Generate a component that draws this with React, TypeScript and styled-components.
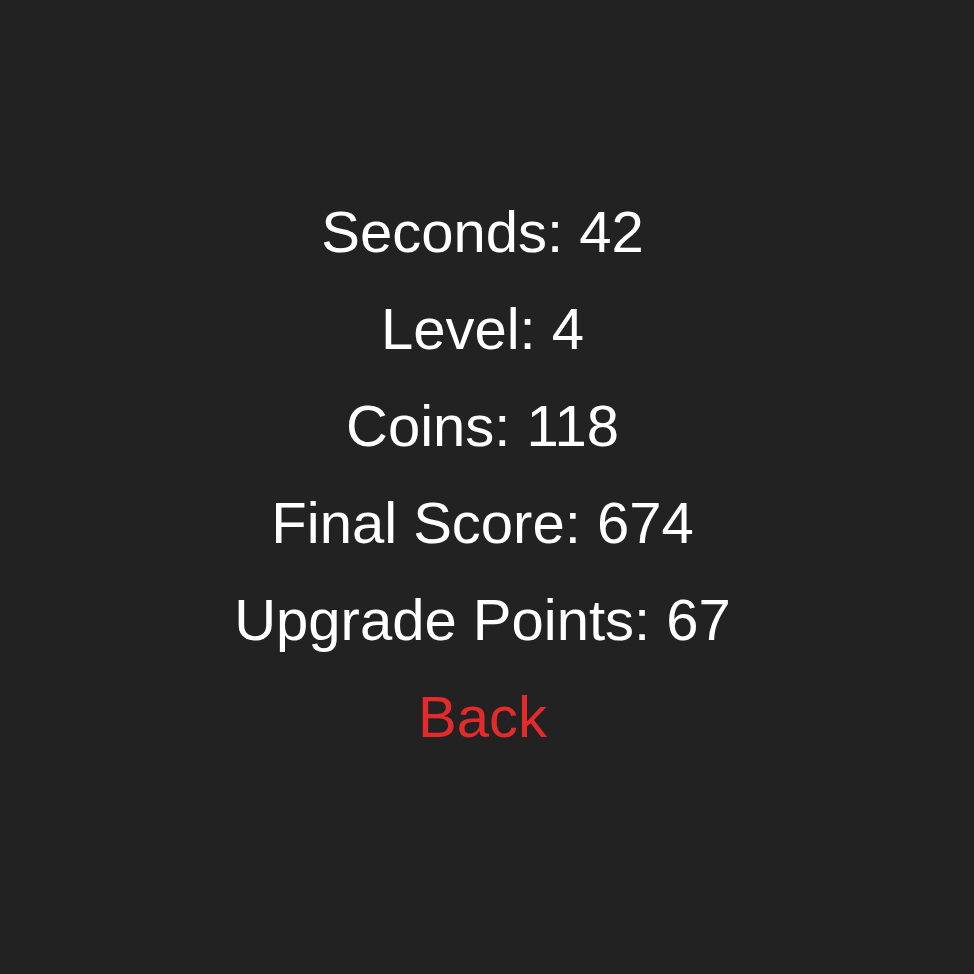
import React from 'react';
import styled, { createGlobalStyle } from 'styled-components';

const GlobalStyle = createGlobalStyle`
  html, body {
    margin: 0;
    padding: 0;
    background: #222222;
  }
`;

const Screen = styled.div`
  box-sizing: border-box;
  min-height: 100vh;
  padding: 0 9px 27px 0;
  display: flex;
  flex-direction: column;
  align-items: center;
  justify-content: center;
  background: #222222;
  font-family: 'Liberation Sans', Arial, sans-serif;
`;

const StatLine = styled.div<{ $accent?: boolean }>`
  font-size: 58px;
  line-height: 97px;
  color: ${(p) => (p.$accent ? '#e32b2b' : '#ffffff')};
  cursor: ${(p) => (p.$accent ? 'pointer' : 'default')};
  white-space: nowrap;
`;

interface IStats {
  seconds: number;
  level: number;
  coins: number;
  score: number;
  points: number;
}

const stats: IStats = { seconds: 42, level: 4, coins: 118, score: 674, points: 67 };

export default function App() {
  return (
    <>
      <GlobalStyle />
      <Screen>
        <StatLine>Seconds: {stats.seconds}</StatLine>
        <StatLine>Level: {stats.level}</StatLine>
        <StatLine>Coins: {stats.coins}</StatLine>
        <StatLine>Final Score: {stats.score}</StatLine>
        <StatLine>Upgrade Points: {stats.points}</StatLine>
        <StatLine $accent>Back</StatLine>
      </Screen>
    </>
  );
}
